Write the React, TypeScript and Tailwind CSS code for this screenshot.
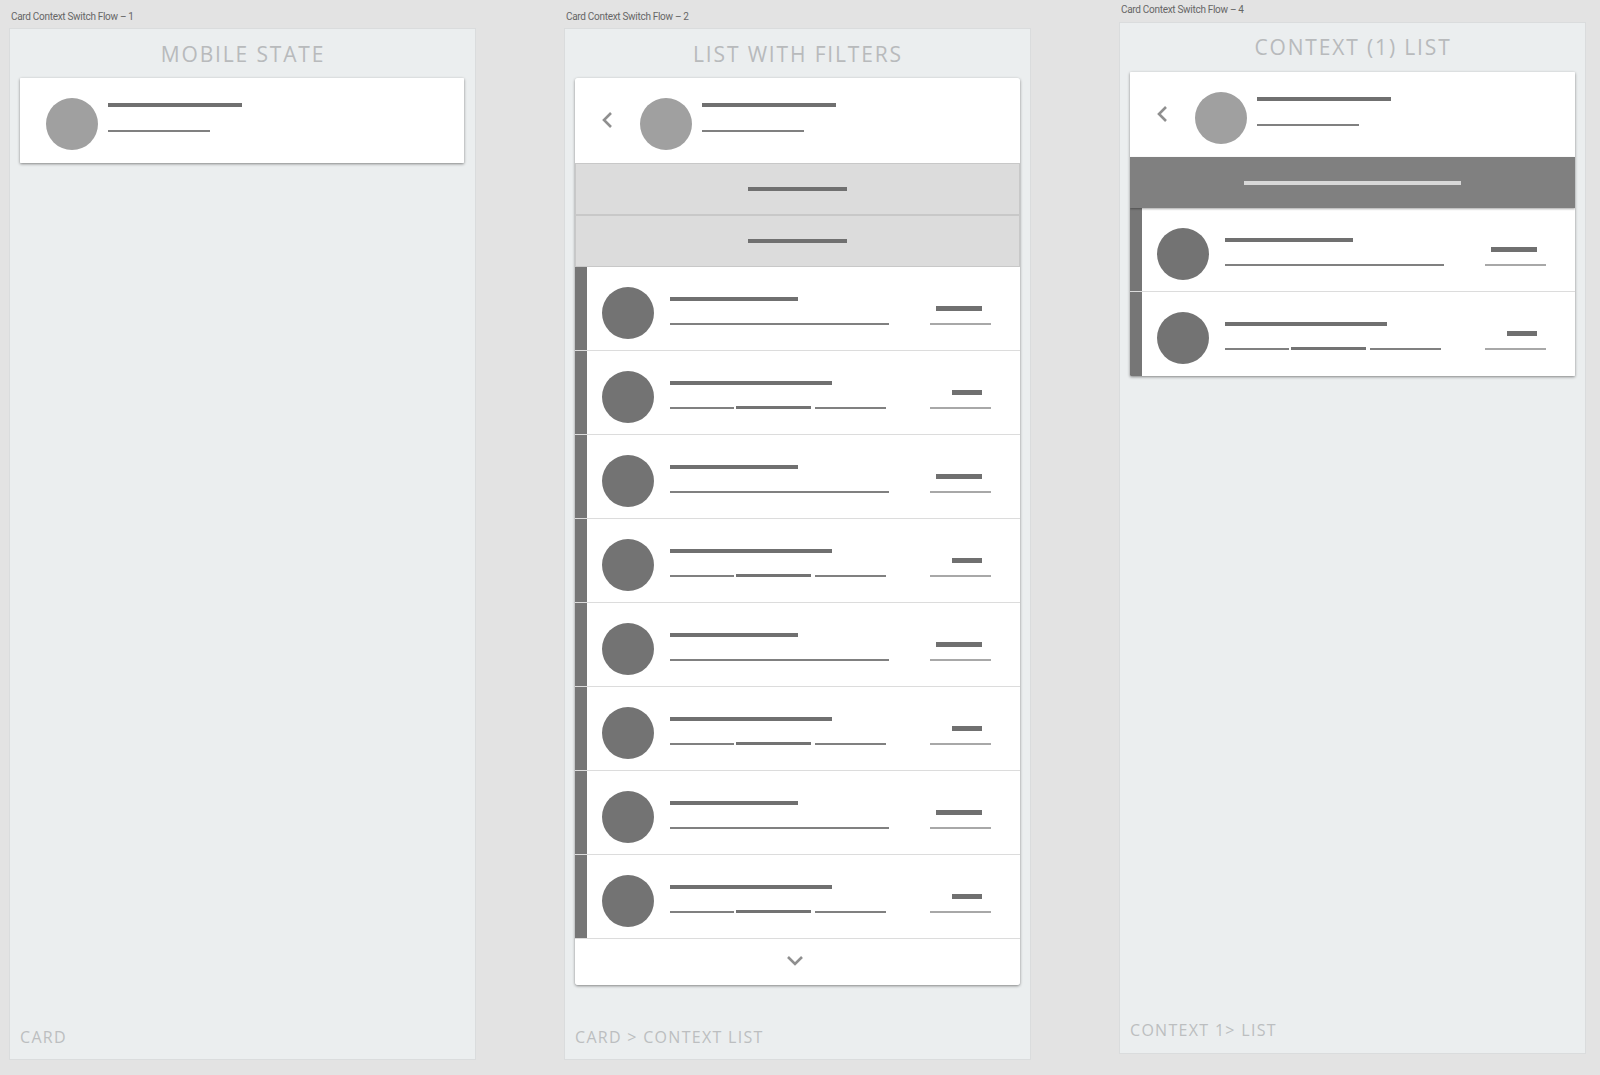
import React from 'react';

const Bar = ({ className }: { className: string }) => <div className={className} />;

// Avatar + two lines, used on top of every card
const CardHeader = ({ back }: { back?: boolean }) => (
  <div className="h-[85px] flex shrink-0 bg-white">
    {back ? (
      <div className="w-[65px] pl-[26px] pt-[33px] shrink-0">
        <svg width="12" height="18" viewBox="0 0 12 18" fill="none">
          <path d="M10 2 L3 9 L10 16" stroke="#8f8f8f" strokeWidth="2.6" />
        </svg>
      </div>
    ) : (
      <div className="w-[26px] shrink-0" />
    )}
    <div className="w-[52px] h-[52px] mt-[20px] rounded-full bg-[#a0a0a0] shrink-0" />
    <div className="ml-[10px] pt-[25px] flex flex-col">
      <Bar className="w-[134px] h-[4px] bg-[#707070]" />
      <Bar className="w-[102px] h-[2px] mt-[23px] bg-[#808080]" />
    </div>
  </div>
);

const ListRow = ({ split, last }: { split: boolean; last?: boolean }) => (
  <div className={last ? 'h-[84px] flex bg-white' : 'h-[84px] flex bg-white border-b border-[#dcdcdc]'}>
    <div className="w-[11.5px] bg-[#767676] shrink-0" />
    <div className="w-[52px] h-[52px] mt-[20px] ml-[15.5px] rounded-full bg-[#737373] shrink-0" />
    <div className="ml-[16px] w-[240px] pt-[30px] shrink-0">
      <Bar className={split ? 'w-[162px] h-[4px] bg-[#707070]' : 'w-[128px] h-[4px] bg-[#707070]'} />
      {split ? (
        <div className="flex items-end h-[3px] mt-[21px]">
          <Bar className="w-[64px] h-[2px] bg-[#808080]" />
          <Bar className="w-[75px] h-[3px] ml-[2px] bg-[#737373]" />
          <Bar className="w-[71px] h-[2px] ml-[4px] bg-[#808080]" />
        </div>
      ) : (
        <Bar className="w-[219px] h-[2px] mt-[22px] bg-[#808080]" />
      )}
    </div>
    <div className="ml-[20px] w-[61px] pt-[39px] flex flex-col">
      <Bar className={split ? 'w-[30px] h-[5px] ml-[22px] bg-[#707070]' : 'w-[46px] h-[5px] ml-[6px] bg-[#707070]'} />
      <Bar className="w-[61px] h-[2px] mt-[12px] bg-[#a8a8a8]" />
    </div>
  </div>
);

const FilterRow = () => (
  <div className="h-[52px] flex items-center justify-center bg-[#dcdcdc] border border-[#c8c8c8]">
    <Bar className="w-[99px] h-[4px] bg-[#707070]" />
  </div>
);

const Artboard = ({
  name,
  title,
  note,
  tight,
  className,
  children,
}: {
  name: string;
  title: string;
  note: string;
  tight?: boolean; // third board sits a fraction higher, its texts land 1px up
  className: string;
  children: React.ReactNode;
}) => (
  <div className={className}>
    <div className={tight ? "h-[28px] pl-[2px] pt-[9px] text-[10px] leading-[14px] text-[#666] font-['Roboto',sans-serif] tracking-[-0.3px]" : "h-[28px] pl-[2px] pt-[10px] text-[10px] leading-[14px] text-[#666] font-['Roboto',sans-serif] tracking-[-0.3px]"}>
      {name}
    </div>
    <div className="w-[467px] h-[1032px] flex flex-col bg-[#ebeeef] border border-[#dadcdd] px-[10px]">
      <div className={tight ? "h-[49px] shrink-0 pt-[9px] pl-[1px] text-center text-[21px] leading-[30px] tracking-[1.85px] text-[#b8babc] font-['Open_Sans',sans-serif]" : "h-[49px] shrink-0 pt-[10px] pl-[1px] text-center text-[21px] leading-[30px] tracking-[1.85px] text-[#b8babc] font-['Open_Sans',sans-serif]"}>
        {title}
      </div>
      <div className="flex-1 min-h-0">{children}</div>
      <div className={tight ? "h-[34px] shrink-0 text-[16px] leading-[22px] tracking-[1.3px] text-[#bcbec0] font-['Open_Sans',sans-serif]" : "h-[33px] shrink-0 text-[16px] leading-[22px] tracking-[1.3px] text-[#bcbec0] font-['Open_Sans',sans-serif]"}>
        {note}
      </div>
    </div>
  </div>
);

const rows = [false, true, false, true, false, true, false, true];

export default function App() {
  return (
    <div className="w-[1600px] h-[1075px] overflow-hidden bg-[#e3e3e3] flex items-start pl-[9px]">
      <Artboard name="Card Context Switch Flow – 1" title="MOBILE STATE" note="CARD" className="w-[555px] shrink-0">
        <div className="w-[444px] rounded-[1px] overflow-hidden shadow-[0_1px_3px_rgba(0,0,0,0.45)]">
          <CardHeader />
        </div>
      </Artboard>

      <Artboard name="Card Context Switch Flow – 2" title="LIST WITH FILTERS" note="CARD > CONTEXT LIST" className="w-[555px] shrink-0">
        <div className="w-[445px] rounded-[3px] overflow-hidden shadow-[0_1px_3px_rgba(0,0,0,0.45)]">
          <CardHeader back />
          <FilterRow />
          <FilterRow />
          {rows.map((split, i) => (
            <ListRow key={i} split={split} />
          ))}
          <div className="h-[46px] flex justify-center bg-white pr-[5px] pt-[16px]">
            <svg width="18" height="12" viewBox="0 0 18 12" fill="none">
              <path d="M2 2 L9 9 L16 2" stroke="#8f8f8f" strokeWidth="2.6" />
            </svg>
          </div>
        </div>
      </Artboard>

      <Artboard tight name="Card Context Switch Flow – 4" title="CONTEXT (1) LIST" note="CONTEXT 1> LIST" className="w-[467px] shrink-0 -mt-[6px]">
        <div className="w-[445px] rounded-[1px] overflow-hidden shadow-[0_1px_3px_rgba(0,0,0,0.45)]">
          <CardHeader back />
          <div className="relative h-[51px] pt-[1px] flex items-center justify-center bg-[#808080] shadow-[0_1px_2px_rgba(0,0,0,0.35)]">
            <Bar className="w-[217px] h-[4px] bg-[#d8d8d8]" />
          </div>
          <ListRow split={false} />
          <ListRow split={true} last />
        </div>
      </Artboard>
    </div>
  );
}
